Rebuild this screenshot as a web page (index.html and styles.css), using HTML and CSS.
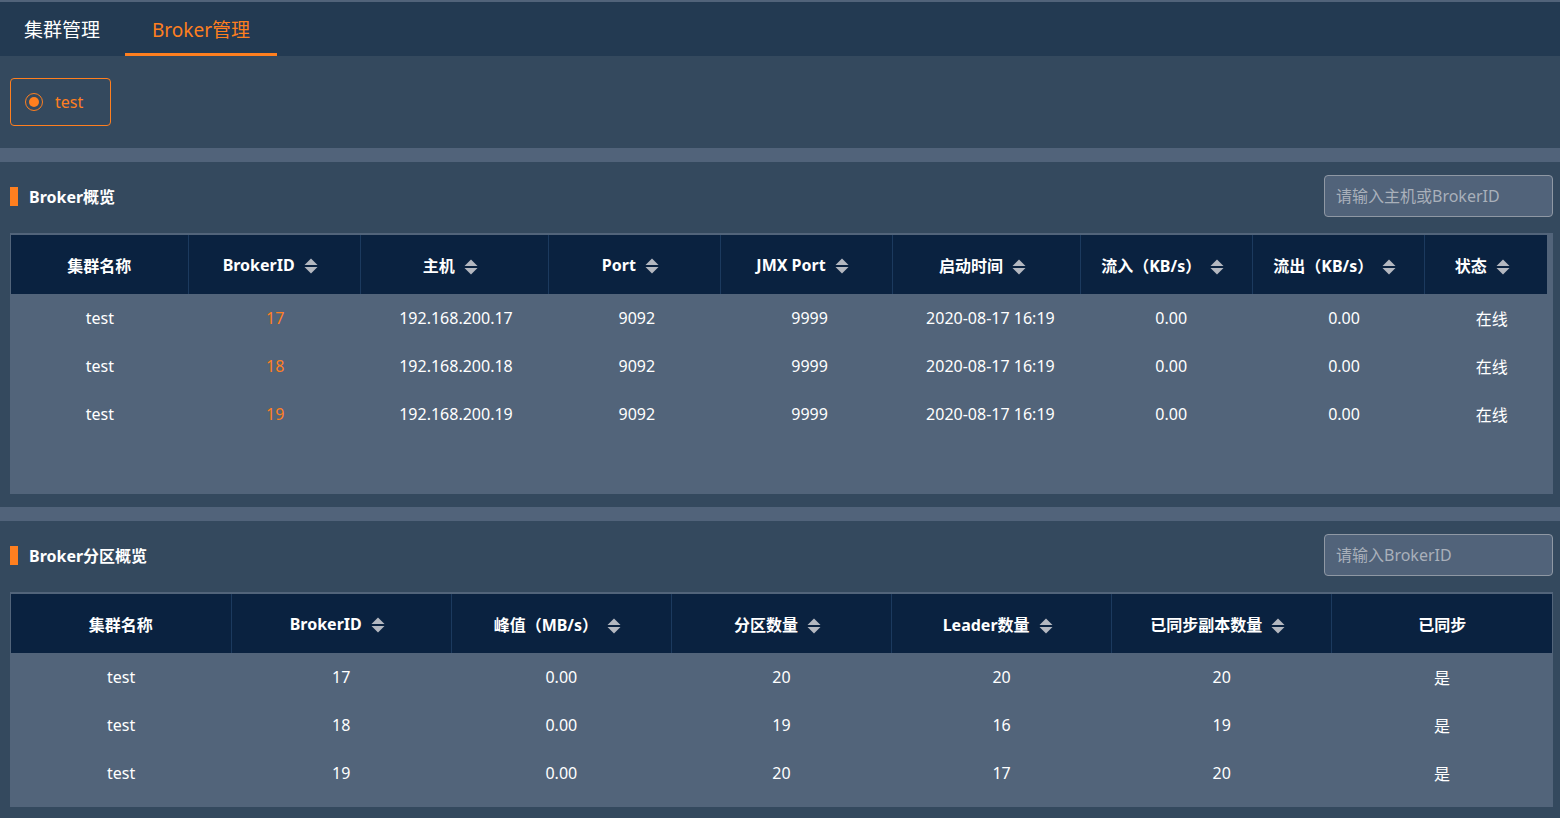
FILE: index.html
```html
<!DOCTYPE html>
<html lang="zh-CN">
<head>
<meta charset="utf-8">
<title>Broker管理</title>
<link rel="stylesheet" href="styles.css">
</head>
<body>
<div class="page">
  <nav class="tabs">
    <div class="tab">集群管理</div>
    <div class="tab active">Broker管理</div>
  </nav>

  <div class="card cluster-card">
    <label class="radio-btn">
      <span class="radio-dot"></span>
      <span class="radio-label">test</span>
    </label>
  </div>

  <section class="card section">
    <div class="section-head">
      <h2 class="section-title">Broker概览</h2>
      <input class="search" type="text" placeholder="请输入主机或BrokerID">
    </div>
    <div class="table-wrap wrap-1">
      <table class="grid grid-head">
        <colgroup>
          <col class="w177"><col class="w172"><col class="w188"><col class="w172"><col class="w172"><col class="w188"><col class="w172"><col class="w172"><col class="w122">
        </colgroup>
        <thead>
          <tr>
            <th>集群名称</th>
            <th>BrokerID<svg class="sort" viewBox="0 0 14 16"><polygon points="7,0.5 13.5,7 0.5,7"/><polygon points="0.5,9 13.5,9 7,15.5"/></svg></th>
            <th>主机<svg class="sort" viewBox="0 0 14 16"><polygon points="7,0.5 13.5,7 0.5,7"/><polygon points="0.5,9 13.5,9 7,15.5"/></svg></th>
            <th>Port<svg class="sort" viewBox="0 0 14 16"><polygon points="7,0.5 13.5,7 0.5,7"/><polygon points="0.5,9 13.5,9 7,15.5"/></svg></th>
            <th>JMX Port<svg class="sort" viewBox="0 0 14 16"><polygon points="7,0.5 13.5,7 0.5,7"/><polygon points="0.5,9 13.5,9 7,15.5"/></svg></th>
            <th>启动时间<svg class="sort" viewBox="0 0 14 16"><polygon points="7,0.5 13.5,7 0.5,7"/><polygon points="0.5,9 13.5,9 7,15.5"/></svg></th>
            <th>流入（KB/s）<svg class="sort" viewBox="0 0 14 16"><polygon points="7,0.5 13.5,7 0.5,7"/><polygon points="0.5,9 13.5,9 7,15.5"/></svg></th>
            <th>流出（KB/s）<svg class="sort" viewBox="0 0 14 16"><polygon points="7,0.5 13.5,7 0.5,7"/><polygon points="0.5,9 13.5,9 7,15.5"/></svg></th>
            <th>状态<svg class="sort" viewBox="0 0 14 16"><polygon points="7,0.5 13.5,7 0.5,7"/><polygon points="0.5,9 13.5,9 7,15.5"/></svg></th>
          </tr>
        </thead>
      </table>
      <table class="grid grid-body">
        <colgroup>
          <col class="w177"><col class="w172"><col class="w188"><col class="w172"><col class="w172"><col class="w188"><col class="w172"><col class="w172"><col class="w122">
        </colgroup>
        <tbody>
          <tr><td>test</td><td class="hl">17</td><td>192.168.200.17</td><td>9092</td><td>9999</td><td>2020-08-17 16:19</td><td>0.00</td><td>0.00</td><td>在线</td></tr>
          <tr><td>test</td><td class="hl">18</td><td>192.168.200.18</td><td>9092</td><td>9999</td><td>2020-08-17 16:19</td><td>0.00</td><td>0.00</td><td>在线</td></tr>
          <tr><td>test</td><td class="hl">19</td><td>192.168.200.19</td><td>9092</td><td>9999</td><td>2020-08-17 16:19</td><td>0.00</td><td>0.00</td><td>在线</td></tr>
        </tbody>
      </table>
    </div>
  </section>

  <section class="card section">
    <div class="section-head">
      <h2 class="section-title">Broker分区概览</h2>
      <input class="search" type="text" placeholder="请输入BrokerID">
    </div>
    <div class="table-wrap wrap-2">
      <table class="grid">
        <thead>
          <tr>
            <th>集群名称</th>
            <th>BrokerID<svg class="sort" viewBox="0 0 14 16"><polygon points="7,0.5 13.5,7 0.5,7"/><polygon points="0.5,9 13.5,9 7,15.5"/></svg></th>
            <th>峰值（MB/s）<svg class="sort" viewBox="0 0 14 16"><polygon points="7,0.5 13.5,7 0.5,7"/><polygon points="0.5,9 13.5,9 7,15.5"/></svg></th>
            <th>分区数量<svg class="sort" viewBox="0 0 14 16"><polygon points="7,0.5 13.5,7 0.5,7"/><polygon points="0.5,9 13.5,9 7,15.5"/></svg></th>
            <th>Leader数量<svg class="sort" viewBox="0 0 14 16"><polygon points="7,0.5 13.5,7 0.5,7"/><polygon points="0.5,9 13.5,9 7,15.5"/></svg></th>
            <th>已同步副本数量<svg class="sort" viewBox="0 0 14 16"><polygon points="7,0.5 13.5,7 0.5,7"/><polygon points="0.5,9 13.5,9 7,15.5"/></svg></th>
            <th>已同步</th>
          </tr>
        </thead>
        <tbody>
          <tr><td>test</td><td>17</td><td>0.00</td><td>20</td><td>20</td><td>20</td><td>是</td></tr>
          <tr><td>test</td><td>18</td><td>0.00</td><td>19</td><td>16</td><td>19</td><td>是</td></tr>
          <tr><td>test</td><td>19</td><td>0.00</td><td>20</td><td>17</td><td>20</td><td>是</td></tr>
        </tbody>
      </table>
    </div>
  </section>
</div>
</body>
</html>
```

FILE: styles.css
```css
html, body {
  margin: 0;
  padding: 0;
  overflow: hidden;
}

body {
  background: #51637a;
  font-family: "Noto Sans", "Noto Sans CJK SC", sans-serif;
  color: #ffffff;
  font-size: 16px;
}

.page {
  padding-top: 2px;
  display: flex;
  flex-direction: column;
  gap: 14px;
}

/* Tabs */
.tabs {
  display: flex;
  height: 54px;
  background: #233a52;
  margin-bottom: -14px;
}

.tab {
  box-sizing: border-box;
  height: 54px;
  padding: 3px 25px 0 24px;
  display: flex;
  align-items: center;
  font-size: 19px;
  color: #ffffff;
  border-bottom: 3px solid transparent;
}

.tab.active {
  padding: 3px 27px 0 27px;
  color: #ff7f1f;
  border-bottom-color: #ff7f1f;
}

/* Cards */
.card {
  background: #34495e;
}

.cluster-card {
  padding: 22px 10px;
  display: flex;
}

.radio-btn {
  box-sizing: border-box;
  width: 101px;
  height: 48px;
  border: 1px solid #ff7f1f;
  border-radius: 4px;
  display: flex;
  align-items: center;
  padding-left: 14px;
  gap: 12px;
  color: #ff7f1f;
  font-size: 16px;
}

.radio-dot {
  box-sizing: border-box;
  width: 18px;
  height: 18px;
  border: 1.5px solid #ff7f1f;
  border-radius: 50%;
  display: flex;
  align-items: center;
  justify-content: center;
}

.radio-dot::after {
  content: "";
  width: 10px;
  height: 10px;
  border-radius: 50%;
  background: #ff7f1f;
}

.radio-label {
  padding-bottom: 1px;
}

/* Sections */
.section {
  padding: 13px 7px 13px 10px;
}

.section-head {
  height: 42px;
  display: flex;
  align-items: center;
  justify-content: space-between;
  margin-bottom: 16px;
}

.section-title {
  margin: 0;
  font-size: 16px;
  font-weight: 700;
  color: #ffffff;
  display: flex;
  align-items: center;
  gap: 11px;
}

.section-title::before {
  content: "";
  width: 8px;
  height: 19px;
  background: #ff7f1f;
}

.search {
  box-sizing: border-box;
  width: 229px;
  height: 42px;
  border: 1px solid #8f98a4;
  border-radius: 4px;
  background: #51637a;
  padding: 0 11px;
  font-family: "Noto Sans", "Noto Sans CJK SC", sans-serif;
  font-size: 16px;
  color: #ffffff;
  outline: none;
}

.search::placeholder {
  color: #a9b0ba;
}

/* Tables */
.table-wrap {
  background: #52647a;
}

.wrap-1 {
  padding: 2px 0 56px 1px;
}

.wrap-2 {
  padding: 2px 1px 10px 1px;
}

.grid {
  width: 100%;
  border-collapse: collapse;
  table-layout: fixed;
}

.grid-head {
  width: calc(100% - 6px);
}

.w177 { width: 177px; }
.w172 { width: 172px; }
.w188 { width: 188px; }
.w122 { width: 122px; }

.grid th {
  height: 59px;
  padding: 0;
  background: #0a2240;
  color: #ffffff;
  font-size: 16px;
  font-weight: 700;
  text-align: center;
  vertical-align: middle;
  white-space: nowrap;
  border-right: 1px solid #1c3a5e;
}

.grid th:last-child {
  border-right: none;
}

.grid td {
  height: 48px;
  padding: 0;
  text-align: center;
  vertical-align: middle;
  color: #ffffff;
  font-size: 16px;
  white-space: nowrap;
}

.grid td.hl {
  color: #ff7f1f;
}

.sort {
  width: 14px;
  height: 16px;
  margin: 0 8px 0 9px;
  vertical-align: -3px;
  fill: #b4b8c0;
}
```
